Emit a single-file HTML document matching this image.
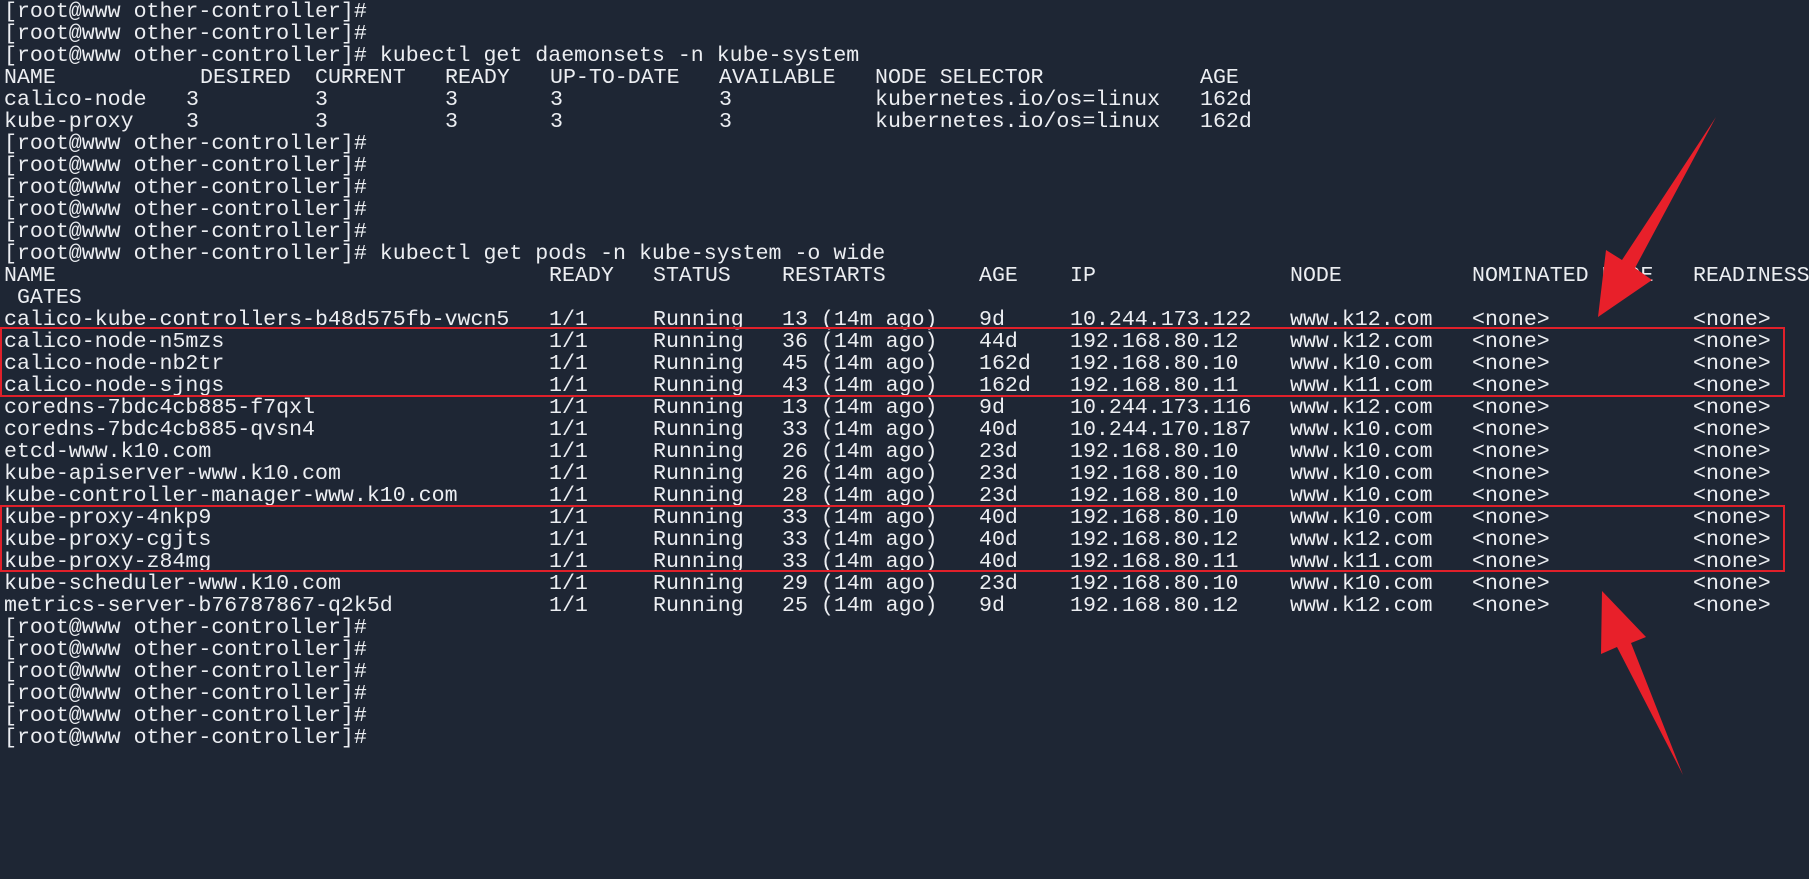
<!DOCTYPE html>
<html><head><meta charset="utf-8"><style>
html,body{margin:0;padding:0;}
body{width:1809px;height:877px;background:#1e2634;position:relative;overflow:hidden;
font-family:"Liberation Mono",monospace;font-size:21.6px;color:#eceef2;}
#t{position:absolute;left:0;top:2px;width:1809px;height:877px;}
.l{position:absolute;left:0;height:22px;line-height:22px;white-space:pre;width:1809px;}
.l span{position:absolute;top:0;}
.box{position:absolute;border:2px solid #e0202a;box-sizing:border-box;}
</style></head><body>
<div id="t">
<div class="l" style="top:-1px"><span style="left:4px">[root@www other-controller]#</span></div>
<div class="l" style="top:21px"><span style="left:4px">[root@www other-controller]#</span></div>
<div class="l" style="top:43px"><span style="left:4px">[root@www other-controller]# kubectl get daemonsets -n kube-system</span></div>
<div class="l" style="top:65px"><span style="left:4px">NAME</span><span style="left:200px">DESIRED</span><span style="left:315px">CURRENT</span><span style="left:445px">READY</span><span style="left:550px">UP-TO-DATE</span><span style="left:719px">AVAILABLE</span><span style="left:875px">NODE SELECTOR</span><span style="left:1200px">AGE</span></div>
<div class="l" style="top:87px"><span style="left:4px">calico-node</span><span style="left:186px">3</span><span style="left:315px">3</span><span style="left:445px">3</span><span style="left:550px">3</span><span style="left:719px">3</span><span style="left:875px">kubernetes.io/os=linux</span><span style="left:1200px">162d</span></div>
<div class="l" style="top:109px"><span style="left:4px">kube-proxy</span><span style="left:186px">3</span><span style="left:315px">3</span><span style="left:445px">3</span><span style="left:550px">3</span><span style="left:719px">3</span><span style="left:875px">kubernetes.io/os=linux</span><span style="left:1200px">162d</span></div>
<div class="l" style="top:131px"><span style="left:4px">[root@www other-controller]#</span></div>
<div class="l" style="top:153px"><span style="left:4px">[root@www other-controller]#</span></div>
<div class="l" style="top:175px"><span style="left:4px">[root@www other-controller]#</span></div>
<div class="l" style="top:197px"><span style="left:4px">[root@www other-controller]#</span></div>
<div class="l" style="top:219px"><span style="left:4px">[root@www other-controller]#</span></div>
<div class="l" style="top:241px"><span style="left:4px">[root@www other-controller]# kubectl get pods -n kube-system -o wide</span></div>
<div class="l" style="top:263px"><span style="left:4px">NAME</span><span style="left:549px">READY</span><span style="left:653px">STATUS</span><span style="left:782px">RESTARTS</span><span style="left:979px">AGE</span><span style="left:1070px">IP</span><span style="left:1290px">NODE</span><span style="left:1472px">NOMINATED NODE</span><span style="left:1693px">READINESS</span></div>
<div class="l" style="top:285px"><span style="left:4px"> GATES</span></div>

<div class="l" style="top:307px"><span style="left:4px">calico-kube-controllers-b48d575fb-vwcn5</span><span style="left:549px">1/1</span><span style="left:653px">Running</span><span style="left:782px">13 (14m ago)</span><span style="left:979px">9d</span><span style="left:1070px">10.244.173.122</span><span style="left:1290px">www.k12.com</span><span style="left:1472px">&lt;none&gt;</span><span style="left:1693px">&lt;none&gt;</span></div>
<div class="l" style="top:329px"><span style="left:4px">calico-node-n5mzs</span><span style="left:549px">1/1</span><span style="left:653px">Running</span><span style="left:782px">36 (14m ago)</span><span style="left:979px">44d</span><span style="left:1070px">192.168.80.12</span><span style="left:1290px">www.k12.com</span><span style="left:1472px">&lt;none&gt;</span><span style="left:1693px">&lt;none&gt;</span></div>
<div class="l" style="top:351px"><span style="left:4px">calico-node-nb2tr</span><span style="left:549px">1/1</span><span style="left:653px">Running</span><span style="left:782px">45 (14m ago)</span><span style="left:979px">162d</span><span style="left:1070px">192.168.80.10</span><span style="left:1290px">www.k10.com</span><span style="left:1472px">&lt;none&gt;</span><span style="left:1693px">&lt;none&gt;</span></div>
<div class="l" style="top:373px"><span style="left:4px">calico-node-sjngs</span><span style="left:549px">1/1</span><span style="left:653px">Running</span><span style="left:782px">43 (14m ago)</span><span style="left:979px">162d</span><span style="left:1070px">192.168.80.11</span><span style="left:1290px">www.k11.com</span><span style="left:1472px">&lt;none&gt;</span><span style="left:1693px">&lt;none&gt;</span></div>
<div class="l" style="top:395px"><span style="left:4px">coredns-7bdc4cb885-f7qxl</span><span style="left:549px">1/1</span><span style="left:653px">Running</span><span style="left:782px">13 (14m ago)</span><span style="left:979px">9d</span><span style="left:1070px">10.244.173.116</span><span style="left:1290px">www.k12.com</span><span style="left:1472px">&lt;none&gt;</span><span style="left:1693px">&lt;none&gt;</span></div>
<div class="l" style="top:417px"><span style="left:4px">coredns-7bdc4cb885-qvsn4</span><span style="left:549px">1/1</span><span style="left:653px">Running</span><span style="left:782px">33 (14m ago)</span><span style="left:979px">40d</span><span style="left:1070px">10.244.170.187</span><span style="left:1290px">www.k10.com</span><span style="left:1472px">&lt;none&gt;</span><span style="left:1693px">&lt;none&gt;</span></div>
<div class="l" style="top:439px"><span style="left:4px">etcd-www.k10.com</span><span style="left:549px">1/1</span><span style="left:653px">Running</span><span style="left:782px">26 (14m ago)</span><span style="left:979px">23d</span><span style="left:1070px">192.168.80.10</span><span style="left:1290px">www.k10.com</span><span style="left:1472px">&lt;none&gt;</span><span style="left:1693px">&lt;none&gt;</span></div>
<div class="l" style="top:461px"><span style="left:4px">kube-apiserver-www.k10.com</span><span style="left:549px">1/1</span><span style="left:653px">Running</span><span style="left:782px">26 (14m ago)</span><span style="left:979px">23d</span><span style="left:1070px">192.168.80.10</span><span style="left:1290px">www.k10.com</span><span style="left:1472px">&lt;none&gt;</span><span style="left:1693px">&lt;none&gt;</span></div>
<div class="l" style="top:483px"><span style="left:4px">kube-controller-manager-www.k10.com</span><span style="left:549px">1/1</span><span style="left:653px">Running</span><span style="left:782px">28 (14m ago)</span><span style="left:979px">23d</span><span style="left:1070px">192.168.80.10</span><span style="left:1290px">www.k10.com</span><span style="left:1472px">&lt;none&gt;</span><span style="left:1693px">&lt;none&gt;</span></div>
<div class="l" style="top:505px"><span style="left:4px">kube-proxy-4nkp9</span><span style="left:549px">1/1</span><span style="left:653px">Running</span><span style="left:782px">33 (14m ago)</span><span style="left:979px">40d</span><span style="left:1070px">192.168.80.10</span><span style="left:1290px">www.k10.com</span><span style="left:1472px">&lt;none&gt;</span><span style="left:1693px">&lt;none&gt;</span></div>
<div class="l" style="top:527px"><span style="left:4px">kube-proxy-cgjts</span><span style="left:549px">1/1</span><span style="left:653px">Running</span><span style="left:782px">33 (14m ago)</span><span style="left:979px">40d</span><span style="left:1070px">192.168.80.12</span><span style="left:1290px">www.k12.com</span><span style="left:1472px">&lt;none&gt;</span><span style="left:1693px">&lt;none&gt;</span></div>
<div class="l" style="top:549px"><span style="left:4px">kube-proxy-z84mg</span><span style="left:549px">1/1</span><span style="left:653px">Running</span><span style="left:782px">33 (14m ago)</span><span style="left:979px">40d</span><span style="left:1070px">192.168.80.11</span><span style="left:1290px">www.k11.com</span><span style="left:1472px">&lt;none&gt;</span><span style="left:1693px">&lt;none&gt;</span></div>
<div class="l" style="top:571px"><span style="left:4px">kube-scheduler-www.k10.com</span><span style="left:549px">1/1</span><span style="left:653px">Running</span><span style="left:782px">29 (14m ago)</span><span style="left:979px">23d</span><span style="left:1070px">192.168.80.10</span><span style="left:1290px">www.k10.com</span><span style="left:1472px">&lt;none&gt;</span><span style="left:1693px">&lt;none&gt;</span></div>
<div class="l" style="top:593px"><span style="left:4px">metrics-server-b76787867-q2k5d</span><span style="left:549px">1/1</span><span style="left:653px">Running</span><span style="left:782px">25 (14m ago)</span><span style="left:979px">9d</span><span style="left:1070px">192.168.80.12</span><span style="left:1290px">www.k12.com</span><span style="left:1472px">&lt;none&gt;</span><span style="left:1693px">&lt;none&gt;</span></div>
<div class="l" style="top:615px"><span style="left:4px">[root@www other-controller]#</span></div>
<div class="l" style="top:637px"><span style="left:4px">[root@www other-controller]#</span></div>
<div class="l" style="top:659px"><span style="left:4px">[root@www other-controller]#</span></div>
<div class="l" style="top:681px"><span style="left:4px">[root@www other-controller]#</span></div>
<div class="l" style="top:703px"><span style="left:4px">[root@www other-controller]#</span></div>
<div class="l" style="top:725px"><span style="left:4px">[root@www other-controller]#</span></div>
</div>

<div class="box" style="left:0;top:327px;width:1785px;height:70px"></div>
<div class="box" style="left:0;top:505px;width:1785px;height:67px"></div>

<svg width="1809" height="877" style="position:absolute;left:0;top:0">
<polygon fill="#e8202a" points="1716,117 1635,268 1652,280 1598,317 1606,250 1622,260"/>
<polygon fill="#e8202a" points="1683,775 1631,643 1646,637 1602,591 1601,654 1617,647"/>
</svg>
</body></html>
